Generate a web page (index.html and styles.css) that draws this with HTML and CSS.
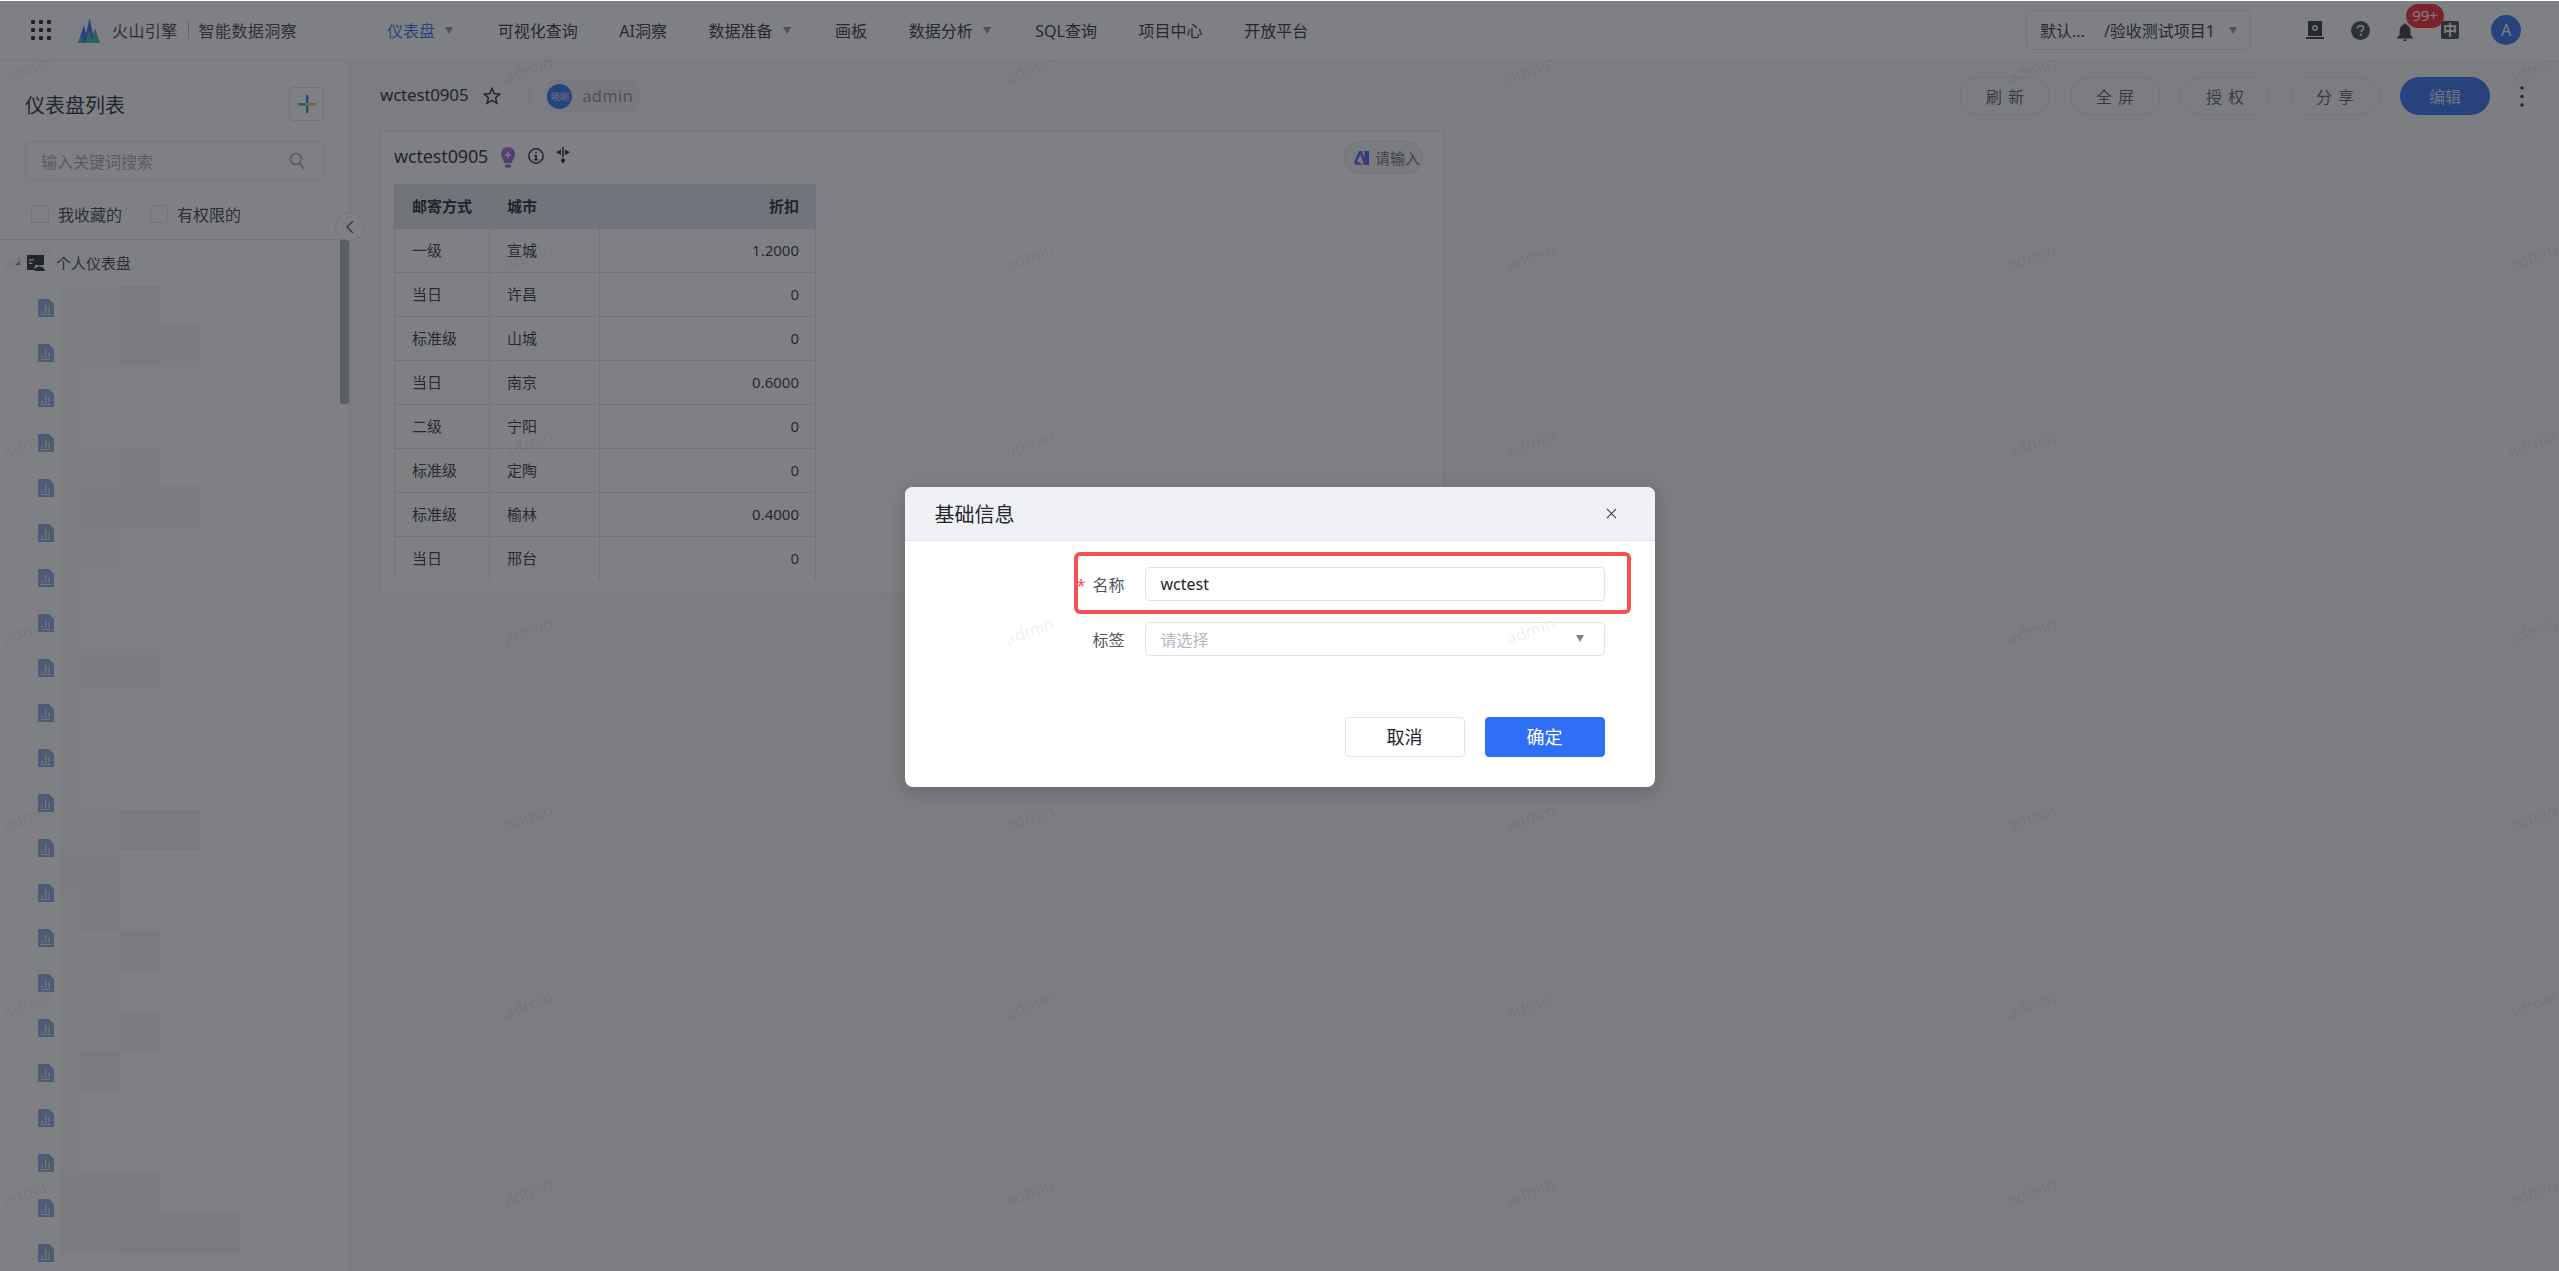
FILE: index.html
```html
<!DOCTYPE html>
<html lang="zh-CN">
<head>
    <meta charset="utf-8">
    <title>智能数据洞察 - 仪表盘</title>
    <link rel="stylesheet" href="styles.css">
</head>
<body>

<!-- Top navigation -->
<header class="topbar">
    <svg class="apps-icon" viewBox="0 0 20 20" width="20" height="20">
        <g fill="#1f2329">
            <rect x="0" y="0" width="4" height="4" rx="1"/><rect x="8" y="0" width="4" height="4" rx="1"/><rect x="16" y="0" width="4" height="4" rx="1"/>
            <rect x="0" y="8" width="4" height="4" rx="1"/><rect x="8" y="8" width="4" height="4" rx="1"/><rect x="16" y="8" width="4" height="4" rx="1"/>
            <rect x="0" y="16" width="4" height="4" rx="1"/><rect x="8" y="16" width="4" height="4" rx="1"/><rect x="16" y="16" width="4" height="4" rx="1"/>
        </g>
    </svg>
    <svg class="logo" viewBox="0 0 22 25" width="22" height="25">
        <path d="M0 25 L6 7 L10 25Z" fill="#2f6ff0"/>
        <path d="M6 25 L11.5 0 L17 25Z" fill="#2f6ff0"/>
        <path d="M13 25 L17 10 L22 25Z" fill="#35b8b0"/>
        <path d="M0 25 L3 17 L6 25Z" fill="#35b8b0"/>
        <path d="M7 25 L11 13 L15 25Z" fill="#35b8b0"/>
    </svg>
    <span class="brand">火山引擎</span>
    <span class="brand-line"></span>
    <span class="brand">智能数据洞察</span>
    <nav class="nav">
        <a class="nav-item active">仪表盘<i class="caret"></i></a>
        <a class="nav-item">可视化查询</a>
        <a class="nav-item">AI洞察</a>
        <a class="nav-item">数据准备<i class="caret"></i></a>
        <a class="nav-item">画板</a>
        <a class="nav-item">数据分析<i class="caret"></i></a>
        <a class="nav-item">SQL查询</a>
        <a class="nav-item">项目中心</a>
        <a class="nav-item">开放平台</a>
    </nav>
    <div class="project-select">
        <span class="project-org">默认...</span>
        <span>/验收测试项目1</span>
        <i class="caret"></i>
    </div>
    <svg class="tool-icon book" viewBox="0 0 18 18" width="18" height="18">
        <path d="M2 0H16V15H2Z" fill="#2b3038"/>
        <rect x="0" y="16" width="18" height="2" fill="#2b3038"/>
        <circle cx="9" cy="7" r="3" fill="#d8dade"/>
        <circle cx="9" cy="7" r="1.2" fill="#2b3038"/>
    </svg>
    <svg class="tool-icon help" viewBox="0 0 19 19" width="19" height="19">
        <circle cx="9.5" cy="9.5" r="9.5" fill="#3c4450"/>
        <path d="M6.5 7.4C6.5 5.6 8 4.6 9.6 4.6C11.3 4.6 12.6 5.7 12.6 7.2C12.6 9.3 10 9.3 10 11.3" fill="none" stroke="#e8e8ea" stroke-width="1.8"/>
        <rect x="9" y="12.8" width="2" height="2" fill="#e8e8ea"/>
    </svg>
    <div class="bell">
        <svg viewBox="0 0 16 18" width="16" height="18">
            <path d="M8 0.5C9 0.5 9.5 1.2 9.5 2C12.3 2.8 13.4 5 13.4 8V12L16 14.8V15.5H0V14.8L2.6 12V8C2.6 5 3.7 2.8 6.5 2C6.5 1.2 7 0.5 8 0.5Z" fill="#2b3038"/>
            <rect x="6.5" y="16.3" width="3" height="1.7" fill="#2b3038"/>
        </svg>
        <span class="badge">99+</span>
    </div>
    <span class="lang">中</span>
    <span class="user-avatar">A</span>
</header>

<div class="workspace">

    <!-- Dashboard list -->
    <aside class="sidebar">
        <div class="sidebar-head">
            <h2>仪表盘列表</h2>
            <button class="add-btn">
                <svg viewBox="0 0 18 18" width="18" height="18">
                    <rect x="8" y="0" width="2.4" height="8" fill="#2f6ff0"/>
                    <rect x="8" y="10" width="2.4" height="8" fill="#2e9e5b"/>
                    <rect x="0" y="8" width="8" height="2.4" fill="#3aa0e0"/>
                    <rect x="10" y="8" width="8" height="2.4" fill="#e8b020"/>
                </svg>
            </button>
        </div>
        <div class="search">
            <span>输入关键词搜索</span>
            <svg viewBox="0 0 16 18" width="16" height="18">
                <circle cx="7" cy="7" r="5.5" fill="none" stroke="#a3a7b0" stroke-width="1.6"/>
                <path d="M11 11.5L15 17" stroke="#a3a7b0" stroke-width="1.8"/>
            </svg>
        </div>
        <div class="filters">
            <label class="check"><i></i>我收藏的</label>
            <label class="check"><i></i>有权限的</label>
        </div>
        <div class="tree">
            <div class="tree-root">
                <i class="tree-arrow"></i>
                <svg viewBox="0 0 18 16" width="18" height="16">
                    <path d="M0 0H17V10H14A4 4 0 0 0 8 15H0Z" fill="#23272e"/>
                    <rect x="2" y="4" width="5" height="1.5" fill="#e0e0e2"/>
                    <rect x="2" y="7.5" width="3.5" height="1.5" fill="#e0e0e2"/>
                    <circle cx="12.5" cy="8" r="2.6" fill="#23272e"/>
                    <path d="M7.5 16C8 12.8 10 11.6 12.5 11.6C15 11.6 17 12.8 18 16Z" fill="#23272e"/>
                </svg>
                <span>个人仪表盘</span>
            </div>
            <div class="tree-item"><svg class="doc"><use href="#doc-icon"/></svg></div>
            <div class="tree-item"><svg class="doc"><use href="#doc-icon"/></svg></div>
            <div class="tree-item"><svg class="doc"><use href="#doc-icon"/></svg></div>
            <div class="tree-item"><svg class="doc"><use href="#doc-icon"/></svg></div>
            <div class="tree-item"><svg class="doc"><use href="#doc-icon"/></svg></div>
            <div class="tree-item"><svg class="doc"><use href="#doc-icon"/></svg></div>
            <div class="tree-item"><svg class="doc"><use href="#doc-icon"/></svg></div>
            <div class="tree-item"><svg class="doc"><use href="#doc-icon"/></svg></div>
            <div class="tree-item"><svg class="doc"><use href="#doc-icon"/></svg></div>
            <div class="tree-item"><svg class="doc"><use href="#doc-icon"/></svg></div>
            <div class="tree-item"><svg class="doc"><use href="#doc-icon"/></svg></div>
            <div class="tree-item"><svg class="doc"><use href="#doc-icon"/></svg></div>
            <div class="tree-item"><svg class="doc"><use href="#doc-icon"/></svg></div>
            <div class="tree-item"><svg class="doc"><use href="#doc-icon"/></svg></div>
            <div class="tree-item"><svg class="doc"><use href="#doc-icon"/></svg></div>
            <div class="tree-item"><svg class="doc"><use href="#doc-icon"/></svg></div>
            <div class="tree-item"><svg class="doc"><use href="#doc-icon"/></svg></div>
            <div class="tree-item"><svg class="doc"><use href="#doc-icon"/></svg></div>
            <div class="tree-item"><svg class="doc"><use href="#doc-icon"/></svg></div>
            <div class="tree-item"><svg class="doc"><use href="#doc-icon"/></svg></div>
            <div class="tree-item"><svg class="doc"><use href="#doc-icon"/></svg></div>
            <div class="tree-item"><svg class="doc"><use href="#doc-icon"/></svg></div>

            <!-- Names pixelated in the screenshot -->
            <div class="mosaic">
                <i class="c1"></i><i class="c1"></i><i class="c3"></i><i class="c0"></i><i></i>
                <i class="cb"></i><i class="c1"></i><i class="c3"></i><i class="c2"></i><i></i>
                <i class="cb"></i><i class="c0"></i><i></i><i></i><i></i>
                <i class="cb"></i><i class="c0"></i><i></i><i></i><i></i>
                <i class="c1"></i><i class="c1"></i><i class="c2"></i><i></i><i></i>
                <i class="c1"></i><i class="c3"></i><i class="c3"></i><i class="c3"></i><i></i>
                <i class="c1"></i><i class="c1"></i><i></i><i></i><i></i>
                <i class="c1"></i><i></i><i></i><i></i><i></i>
                <i class="c1"></i><i class="c0"></i><i></i><i></i><i></i>
                <i class="c1"></i><i class="c2"></i><i class="c2"></i><i></i><i></i>
                <i class="cb"></i><i></i><i></i><i></i><i></i>
                <i class="cb"></i><i></i><i></i><i></i><i></i>
                <i class="cb"></i><i class="c0"></i><i class="c0"></i><i class="c0"></i><i></i>
                <i class="c1"></i><i class="c1"></i><i class="c3"></i><i class="c3"></i><i></i>
                <i class="c2"></i><i class="c2"></i><i class="c0"></i><i></i><i></i>
                <i class="c1"></i><i class="c3"></i><i></i><i></i><i></i>
                <i class="c1"></i><i class="c1"></i><i class="c3"></i><i></i><i></i>
                <i class="c1"></i><i class="c1"></i><i></i><i></i><i></i>
                <i class="c1"></i><i class="c1"></i><i class="c2"></i><i></i><i></i>
                <i class="c1"></i><i class="c3"></i><i></i><i></i><i></i>
                <i class="c1"></i><i></i><i></i><i></i><i></i>
                <i class="cb"></i><i></i><i class="c0"></i><i></i><i></i>
                <i class="c2"></i><i class="c2"></i><i class="c2"></i><i></i><i></i>
                <i class="c2"></i><i class="c2"></i><i class="c3"></i><i class="c3"></i><i class="c3"></i>
            </div>
            <div class="scroll-thumb"></div>
        </div>
        <button class="collapse-btn">
            <svg viewBox="0 0 8 14" width="8" height="14"><path d="M7 1L1 7L7 13" fill="none" stroke="#4e5560" stroke-width="1.4"/></svg>
        </button>
    </aside>

    <!-- Dashboard content -->
    <main class="main">
        <div class="page-head">
            <span class="page-title">wctest0905</span>
            <svg class="star" viewBox="0 0 18 18" width="18" height="18">
                <path d="M9 1.5L11.2 6.6L16.8 7.1L12.6 10.8L13.9 16.3L9 13.4L4.1 16.3L5.4 10.8L1.2 7.1L6.8 6.6Z" fill="none" stroke="#23272e" stroke-width="1.5"/>
            </svg>
            <span class="head-line"></span>
            <span class="owner">
                <span class="owner-avatar">晓刚</span>
                <span class="owner-name">admin</span>
            </span>
            <div class="actions">
                <button class="pill spaced">刷新</button>
                <button class="pill spaced">全屏</button>
                <button class="pill spaced">授权</button>
                <button class="pill spaced">分享</button>
                <button class="pill primary">编辑</button>
                <svg class="more" viewBox="0 0 4 21" width="4" height="21">
                    <circle cx="2" cy="2" r="1.7" fill="#23272e"/><circle cx="2" cy="10.5" r="1.7" fill="#23272e"/><circle cx="2" cy="19" r="1.7" fill="#23272e"/>
                </svg>
            </div>
        </div>

        <section class="card">
            <div class="card-head">
                <span class="card-title">wctest0905</span>
                <svg class="bulb" viewBox="0 0 14 21" width="14" height="21">
                    <defs>
                        <linearGradient id="bulb-fill" x1="0" y1="0" x2="1" y2="1">
                            <stop offset="0" stop-color="#c868d0"/>
                            <stop offset="1" stop-color="#6a60e0"/>
                        </linearGradient>
                    </defs>
                    <path d="M7 0C11 0 14 3 14 7C14 10 12 12 10.6 16H3.4C2 12 0 10 0 7C0 3 3 0 7 0Z" fill="url(#bulb-fill)"/>
                    <path d="M7 4L8.2 6.8L11 8L8.2 9.2L7 12L5.8 9.2L3 8L5.8 6.8Z" fill="#e8e0f8"/>
                    <rect x="4" y="17.5" width="6" height="3" rx="1" fill="#6a60e0"/>
                </svg>
                <svg class="info" viewBox="0 0 16 16" width="16" height="16">
                    <circle cx="8" cy="8" r="7.2" fill="none" stroke="#1f2329" stroke-width="1.5"/>
                    <rect x="7.2" y="3.6" width="1.7" height="1.8" fill="#1f2329"/>
                    <path d="M6 6.9H8.9V11.3H10.2V12.5H5.9V11.3H7.2V8.1H6Z" fill="#1f2329"/>
                </svg>
                <svg class="fork" viewBox="0 0 14 17" width="14" height="17">
                    <rect x="6.2" y="0" width="1.6" height="10" fill="#1f2329"/>
                    <path d="M0 5.2L5 2.4V8Z M14 5.2L9 2.4V8Z" fill="#1f2329"/>
                    <path d="M7 10.5L9.4 13.5L7 16.5L4.6 13.5Z" fill="#1f2329"/>
                </svg>
                <div class="ai-btn">
                    <svg viewBox="0 0 15 14" width="15" height="14">
                        <path d="M0 11L5 0H8L3 11Z" fill="#3f6df0"/>
                        <path d="M5 0H8L13 14H10Z" fill="#7c4de8"/>
                        <path d="M10.5 0H15V14H13L10.5 7Z" fill="#3f5fe0"/>
                        <path d="M0 11H6L8 14H1Z" fill="#9a5cf0"/>
                    </svg>
                    <span>请输入</span>
                </div>
            </div>
            <div class="table-wrap">
                <table class="data-table">
                    <colgroup><col class="col-way"><col class="col-city"><col></colgroup>
                    <thead>
                        <tr><th>邮寄方式</th><th>城市</th><th class="num">折扣</th></tr>
                    </thead>
                    <tbody>
                        <tr><td>一级</td><td>宣城</td><td class="num">1.2000</td></tr>
                        <tr><td>当日</td><td>许昌</td><td class="num">0</td></tr>
                        <tr><td>标准级</td><td>山城</td><td class="num">0</td></tr>
                        <tr><td>当日</td><td>南京</td><td class="num">0.6000</td></tr>
                        <tr><td>二级</td><td>宁阳</td><td class="num">0</td></tr>
                        <tr><td>标准级</td><td>定陶</td><td class="num">0</td></tr>
                        <tr><td>标准级</td><td>榆林</td><td class="num">0.4000</td></tr>
                        <tr><td>当日</td><td>邢台</td><td class="num">0</td></tr>
                    </tbody>
                </table>
            </div>
        </section>
    </main>
</div>

<!-- Modal -->
<div class="overlay">
    <div class="modal">
        <div class="modal-head">
            <h3>基础信息</h3>
            <svg viewBox="0 0 12 12" width="11" height="11"><path d="M1 1L11 11M11 1L1 11" stroke="#3a3f47" stroke-width="1.2"/></svg>
        </div>
        <div class="form">
            <div class="form-row">
                <label class="form-label"><span class="required">*</span>名称</label>
                <div class="field">wctest</div>
            </div>
            <div class="form-row">
                <label class="form-label">标签</label>
                <div class="field placeholder">请选择<i class="caret"></i></div>
            </div>
        </div>
        <div class="modal-foot">
            <button class="modal-btn">取消</button>
            <button class="modal-btn ok">确定</button>
        </div>
        <div class="annotation"></div>
    </div>
</div>

<!-- Watermark over everything -->
<div class="watermark">
    <div class="watermark-grid">
        <span>admin</span><span>admin</span><span>admin</span><span>admin</span><span>admin</span><span>admin</span>
        <span>admin</span><span>admin</span><span>admin</span><span>admin</span><span>admin</span><span>admin</span>
        <span>admin</span><span>admin</span><span>admin</span><span>admin</span><span>admin</span><span>admin</span>
        <span>admin</span><span>admin</span><span>admin</span><span>admin</span><span>admin</span><span>admin</span>
        <span>admin</span><span>admin</span><span>admin</span><span>admin</span><span>admin</span><span>admin</span>
        <span>admin</span><span>admin</span><span>admin</span><span>admin</span><span>admin</span><span>admin</span>
        <span>admin</span><span>admin</span><span>admin</span><span>admin</span><span>admin</span><span>admin</span>
    </div>
</div>

<!-- Shared doc icon -->
<svg class="sprite" width="0" height="0">
    <symbol id="doc-icon" viewBox="0 0 16 18">
        <path d="M1 0H11L16 5V18H0V1Z" fill="#8ca8dc"/>
        <g fill="#e6ecf6">
            <rect x="3" y="15" width="10" height="1"/>
            <rect x="3.5" y="11.5" width="1.2" height="2.5"/>
            <rect x="7" y="5.5" width="1.2" height="8.5"/>
            <rect x="10.5" y="8.5" width="1.2" height="5.5"/>
        </g>
    </symbol>
</svg>

</body>
</html>
```
FILE: styles.css
```css
/* Reset and general */
* {
    margin: 0;
    padding: 0;
    box-sizing: border-box;
}

html, body {
    height: 100%;
}

body {
    position: relative;
    overflow: hidden;
    background: #fff;
    color: #1f2329;
    font-family: "Noto Sans", "Noto Sans CJK SC", sans-serif;
    font-size: 16px;
    display: flex;
    flex-direction: column;
}

button {
    font-family: inherit;
    background: none;
    border: none;
}

i {
    font-style: normal;
}

.caret {
    display: inline-block;
    width: 0;
    height: 0;
    border-left: 4.5px solid transparent;
    border-right: 4.5px solid transparent;
    border-top: 7px solid #8a8f99;
}

/* Top bar */
.topbar {
    flex: none;
    height: 61px;
    display: flex;
    align-items: center;
    padding: 0 38px 0 31px;
    background: #fff;
    border-bottom: 1px solid #ececf0;
    white-space: nowrap;
}

.apps-icon {
    margin-right: 27px;
}

.logo {
    margin-right: 12px;
}

.brand {
    font-size: 16px;
    letter-spacing: 0.4px;
    color: #3a3f47;
}

.brand-line {
    width: 1px;
    height: 18px;
    background: #b8bcc4;
    margin: 0 10px;
}

.nav {
    display: flex;
    align-items: center;
    gap: 41.6px;
    margin-left: 90px;
}

.nav-item {
    color: #2b3038;
    display: flex;
    align-items: center;
}

.nav-item .caret {
    margin: 0 3px 0 10px;
}

.nav-item.active {
    color: #2f6ff0;
}

.project-select {
    margin-left: auto;
    width: 225px;
    height: 40px;
    border: 1px solid #e2e4ea;
    border-radius: 5px;
    display: flex;
    align-items: center;
    padding: 0 13px;
    color: #2b3038;
}

.project-org {
    margin-right: 19px;
}

.project-select .caret {
    margin-left: auto;
}

.tool-icon.book {
    margin-left: 55px;
}

.tool-icon.help {
    margin-left: 27px;
}

.bell {
    position: relative;
    width: 16px;
    height: 18px;
    margin-left: 27px;
    margin-top: 4px;
}

.badge {
    position: absolute;
    left: 9px;
    top: -19px;
    width: 38px;
    height: 24px;
    line-height: 22px;
    text-align: center;
    border-radius: 12px;
    background: #f5222d;
    color: #fff;
    font-size: 15px;
}

.lang {
    margin-left: 28px;
    width: 18px;
    height: 18px;
    border-radius: 2px;
    background: #3c4450;
    color: #fff;
    font-size: 14px;
    line-height: 18px;
    text-align: center;
    font-weight: 700;
}

.user-avatar {
    margin-left: 32px;
    width: 30px;
    height: 30px;
    border-radius: 50%;
    background: #2f6ff0;
    color: #fff;
    font-size: 16px;
    line-height: 30px;
    text-align: center;
}

/* Layout under the top bar */
.workspace {
    flex: 1;
    min-height: 0;
    display: flex;
}

/* Sidebar */
.sidebar {
    position: relative;
    flex: none;
    width: 350px;
    background: #fff;
    border-right: 1px solid #e8eaef;
    display: flex;
    flex-direction: column;
}

.sidebar-head {
    display: flex;
    align-items: center;
    justify-content: space-between;
    padding: 26px 25px 0;
}

.sidebar-head h2 {
    font-size: 20px;
    font-weight: 400;
    color: #23272e;
}

.add-btn {
    width: 35px;
    height: 34px;
    border: 1px solid #dfe1e7;
    border-radius: 4px;
    display: flex;
    align-items: center;
    justify-content: center;
}

.search {
    margin: 20px 25px 0;
    height: 40px;
    border: 1px solid #e2e4ea;
    border-radius: 5px;
    padding: 0 18px 0 15px;
    display: flex;
    align-items: center;
    justify-content: space-between;
    color: #a3a7b0;
}

.filters {
    display: flex;
    gap: 28px;
    padding: 24px 0 0 31px;
    height: 58px;
}

.check {
    display: flex;
    align-items: center;
    gap: 9px;
    height: 18px;
    color: #3a3f47;
}

.check i {
    width: 18px;
    height: 18px;
    border: 1px solid #dfe1e7;
    border-radius: 3px;
}

.tree {
    position: relative;
    flex: 1;
    min-height: 0;
    overflow: hidden;
    border-top: 1px solid #dcdfe5;
}

.tree-root {
    height: 45px;
    display: flex;
    align-items: center;
    padding-left: 15px;
    font-size: 15px;
    color: #3a3f47;
}

.tree-arrow {
    width: 0;
    height: 0;
    border-left: 5px solid transparent;
    border-bottom: 5px solid #8a8f99;
    margin-right: 7px;
}

.tree-root span {
    margin-left: 11px;
}

.tree-item {
    height: 45px;
    display: flex;
    align-items: center;
    padding-left: 38px;
}

.doc {
    width: 16px;
    height: 18px;
}

.sprite {
    position: absolute;
}

.mosaic {
    position: absolute;
    left: 60px;
    top: 46px;
    display: grid;
    grid-template-columns: 20px 40px 40px 40px 40px;
    grid-auto-rows: 40.3px;
}

.mosaic .c0 { background: rgba(0, 0, 0, 0.008); }
.mosaic .c1 { background: rgba(0, 0, 0, 0.02); }
.mosaic .c2 { background: rgba(0, 0, 0, 0.035); }
.mosaic .c3 { background: rgba(0, 0, 0, 0.06); }
.mosaic .cb { background: rgba(120, 150, 170, 0.06); }

.scroll-thumb {
    position: absolute;
    right: 0;
    top: 0;
    width: 9px;
    height: 164px;
    border-radius: 0 0 3px 3px;
    background: #adb0b6;
}

.collapse-btn {
    position: absolute;
    left: 335px;
    top: 151px;
    width: 29px;
    height: 29px;
    border-radius: 50%;
    background: #fff;
    border: 1px solid #e2e4ea;
    display: flex;
    align-items: center;
    justify-content: center;
    z-index: 2;
}

/* Main */
.main {
    flex: 1;
    min-width: 0;
    background: #f5f7fa;
    padding-left: 30px;
}

.page-head {
    height: 70px;
    display: flex;
    align-items: center;
    padding-right: 35px;
}

.page-title {
    font-size: 17px;
    letter-spacing: -0.2px;
    margin-top: -3px;
    color: #23272e;
}

.star {
    margin-left: 15px;
}

.head-line {
    width: 1px;
    height: 26px;
    background: #e2e4ea;
    margin: 0 16px 0 28px;
}

.owner {
    height: 34px;
    width: 94px;
    border-radius: 10px;
    background: #eceef2;
    display: flex;
    align-items: center;
    padding-left: 1px;
}

.owner-avatar {
    width: 25px;
    height: 25px;
    border-radius: 50%;
    background: #2f6ff0;
    color: #cfe0ff;
    font-size: 9px;
    line-height: 25px;
    text-align: center;
}

.owner-name {
    margin-left: 10px;
    color: #8a8f99;
    letter-spacing: 0.6px;
}

.actions {
    margin-left: auto;
    display: flex;
    align-items: center;
    gap: 20px;
}

.pill {
    width: 90px;
    height: 38px;
    border-radius: 19px;
    border: 1px solid #e2e4ea;
    color: #555a63;
    font-size: 16px;
}

.pill.spaced {
    letter-spacing: 6px;
    padding-left: 6px;
}

.pill.primary {
    background: #2f6ff0;
    border-color: #2f6ff0;
    color: #cfe0ff;
}

.more {
    margin-left: 10px;
}

.card {
    width: 1064px;
    height: 463px;
    background: #fff;
    border: 1px solid #e6e8ed;
    padding: 0 13px;
}

.card-head {
    height: 52px;
    display: flex;
    align-items: center;
    padding-bottom: 5px;
}

.card-title {
    font-size: 18px;
    letter-spacing: -0.15px;
    color: #23272e;
}

.bulb {
    margin-left: 13px;
    margin-top: 3px;
}

.info {
    margin-left: 13px;
}

.fork {
    margin-left: 12px;
}

.ai-btn {
    margin-left: auto;
    margin-right: 7px;
    margin-top: 4px;
    width: 79px;
    height: 33px;
    border-radius: 16px;
    border: 1px solid #e2e2ee;
    background: #f2f2f8;
    display: flex;
    align-items: center;
    gap: 6px;
    padding-left: 9px;
    font-size: 15px;
    color: #6a6f78;
    white-space: nowrap;
}

.table-wrap {
    width: 422px;
    height: 396px;
    overflow: hidden;
}

.data-table {
    width: 100%;
    table-layout: fixed;
    border-collapse: collapse;
    font-size: 15px;
    color: #333;
}

.col-way {
    width: 95px;
}

.col-city {
    width: 110px;
}

.data-table th,
.data-table td {
    height: 44px;
    padding: 0 16px 2px 17px;
    border: 1px solid #dfe1e7;
    text-align: left;
}

.data-table th {
    background: #dde2ea;
    font-weight: 700;
    color: #1f2329;
}

.data-table .num {
    text-align: right;
}

/* Modal */
.overlay {
    position: absolute;
    left: 0;
    right: 0;
    top: 1px;
    bottom: 0;
    padding-top: 2px;
    background: rgba(34, 36, 42, 0.58);
    display: flex;
    align-items: center;
    justify-content: center;
    z-index: 10;
}

.modal {
    position: relative;
    width: 750px;
    height: 300px;
    background: #fff;
    border-radius: 8px;
    box-shadow: 0 4px 20px rgba(0, 0, 0, 0.2);
    overflow: hidden;
}

.modal-head {
    height: 54px;
    padding: 0 38px 0 30px;
    background: #f0f1f5;
    border-bottom: 1px solid #e2e4ea;
    display: flex;
    align-items: center;
    justify-content: space-between;
}

.modal-head h3 {
    font-size: 20px;
    font-weight: 400;
    color: #23272e;
}

.form {
    padding: 26px 50px 0 0;
    display: flex;
    flex-direction: column;
    gap: 21px;
}

.form-row {
    display: flex;
    align-items: center;
    gap: 20px;
}

.form-label {
    width: 220px;
    text-align: right;
    color: #4e5560;
}

.required {
    color: #f65050;
    margin-right: 7px;
}

.field {
    flex: 1;
    height: 34px;
    border: 1px solid #e2e4ea;
    border-radius: 4px;
    padding: 0 15px 1px;
    display: flex;
    align-items: center;
    justify-content: space-between;
    color: #23272e;
}

.field.placeholder {
    color: #b4b8c0;
}

.field.placeholder .caret {
    margin-right: 5px;
    border-top-color: #7d8490;
}

.modal-foot {
    margin-top: 61px;
    padding-right: 50px;
    display: flex;
    justify-content: flex-end;
    gap: 20px;
}

.modal-btn {
    width: 120px;
    height: 40px;
    border: 1px solid #e2e4ea;
    border-radius: 4px;
    background: #fff;
    font-size: 18px;
    padding-bottom: 2px;
    color: #23272e;
}

.modal-btn.ok {
    background: #2f6ff5;
    border-color: #2f6ff5;
    color: #fff;
}

/* Annotation drawn on the screenshot */
.annotation {
    position: absolute;
    left: 169px;
    top: 65px;
    width: 557px;
    height: 62px;
    border: 4px solid #f65050;
    border-radius: 6px;
}

/* Watermark */
.watermark {
    position: absolute;
    left: 0;
    right: 0;
    top: 0;
    bottom: 0;
    overflow: hidden;
    z-index: 20;
    pointer-events: none;
}

.watermark-grid {
    margin-top: -24px;
    display: grid;
    grid-template-columns: repeat(5, 501px) 54px;
    grid-auto-rows: 187px;
    align-items: center;
}

.watermark-grid span {
    justify-self: start;
    margin-left: 2px;
    font-size: 17px;
    color: rgba(0, 0, 0, 0.07);
    transform: rotate(-20deg);
}
```
